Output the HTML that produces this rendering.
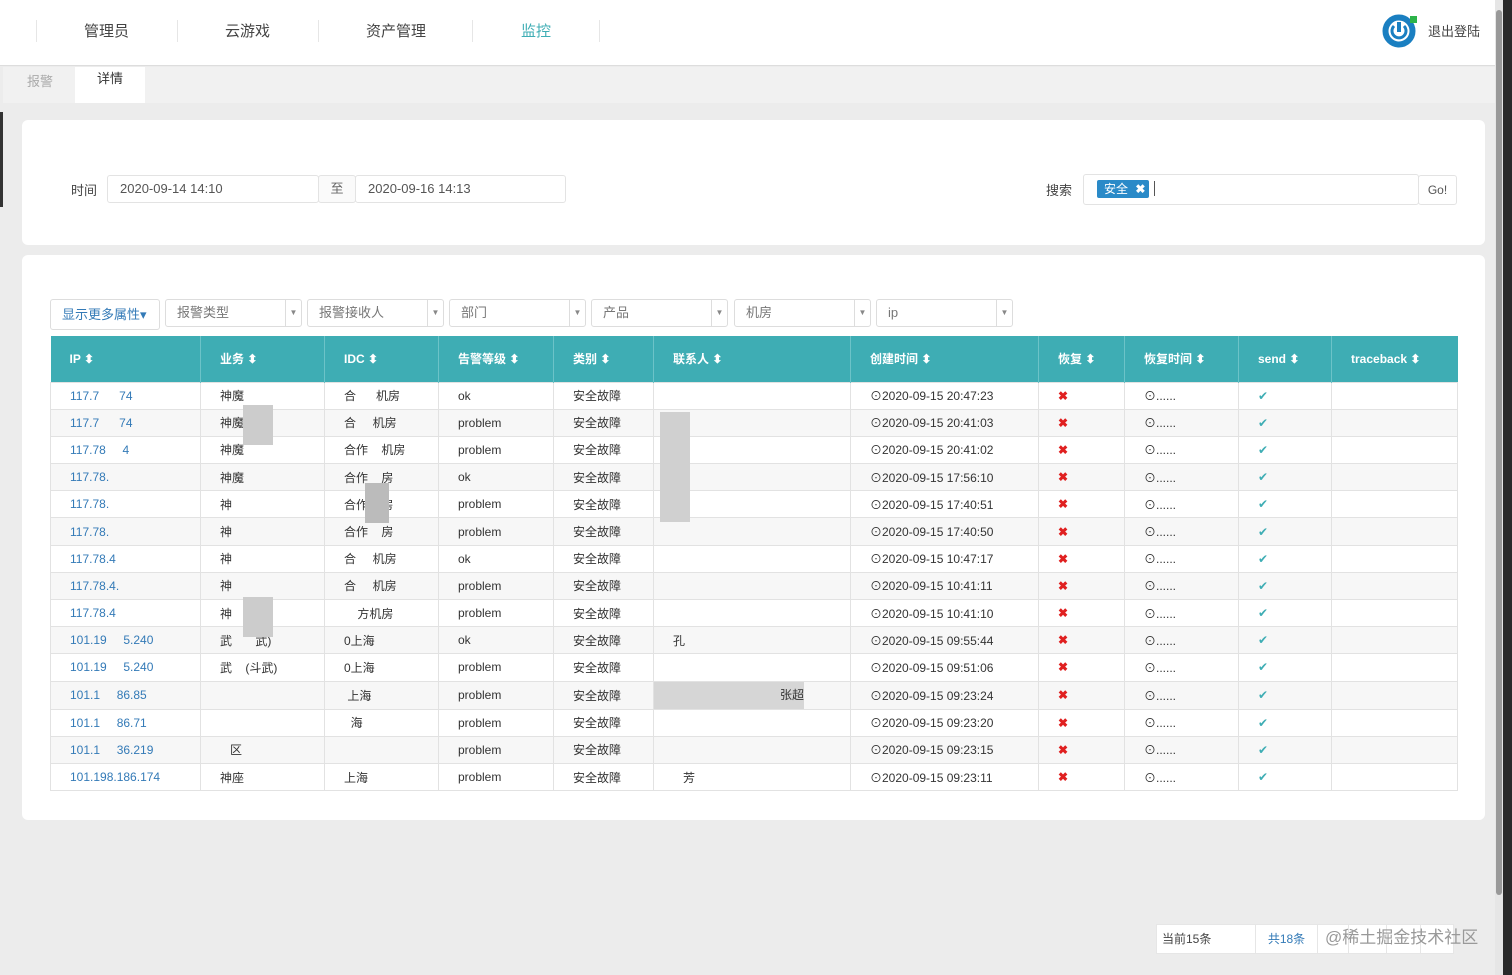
<!DOCTYPE html>
<html><head><meta charset="utf-8">
<style>
*{box-sizing:border-box;margin:0;padding:0}
body{width:1512px;height:975px;overflow:hidden;background:#ececec;font-family:"Liberation Sans","Noto Sans CJK SC",sans-serif;font-size:13px;color:#333;position:relative}
.abs{position:absolute}
#nav{left:0;top:0;width:1495px;height:66px;background:#fff;border-bottom:1px solid #ddd}
.nv{position:absolute;top:20px;font-size:15px;color:#444}
.sep{position:absolute;top:20px;width:1px;height:22px;background:#e6e6e6}
#tabs{left:3px;top:67px;width:1492px;height:36px;background:#f1f1f1}
.card{position:absolute;background:#fff;border-radius:6px;left:22px;width:1463px}
.inp{position:absolute;border:1px solid #e3e3e3;border-radius:3px;background:#fff;color:#555;font-size:13px;padding-left:12px;line-height:26px;height:28px}
.sel{position:absolute;top:299px;height:28px;border:1px solid #ddd;border-radius:3px;background:#fff;color:#777;font-size:13px;line-height:26px;padding-left:11px}
.sel i{position:absolute;right:0;top:0;width:16px;height:26px;border-left:1px solid #ddd;font-style:normal;font-size:8px;color:#888;text-align:center;line-height:26px}
table{position:absolute;left:50px;top:336px;width:1407px;border-collapse:collapse;table-layout:fixed;font-size:12px}
th{background:#3eadb4;color:#fff;height:46px;text-align:left;padding-left:19px;font-weight:bold;border-right:1px solid #6cc3c8;font-size:12px}
th:last-child{border-right:none}
td{height:27.2px;border:1px solid #e2e2e2;padding-left:19px;white-space:nowrap;overflow:hidden;color:#333}
tr:nth-child(odd) td{background:#f7f7f7}
td.ip{color:#337ab7}
.x{color:#e02020;font-weight:bold}
.ok{color:#3eadb4}
.pg{position:absolute;top:924px;height:30px;border:1px solid #e6e6e6;background:#fff;font-size:12px;line-height:28px;white-space:nowrap}
</style></head><body>
<div class="abs" style="left:0;top:0;width:3px;height:66px;background:#333"></div>
<div class="abs" id="nav">
<div class="sep" style="left:36px"></div>
<div class="nv" style="left:84px">管理员</div>
<div class="sep" style="left:177px"></div>
<div class="nv" style="left:225px">云游戏</div>
<div class="sep" style="left:318px"></div>
<div class="nv" style="left:366px">资产管理</div>
<div class="sep" style="left:472px"></div>
<div class="nv" style="left:521px;color:#3eadb4">监控</div>
<div class="sep" style="left:599px"></div>
<svg class="abs" style="left:1382px;top:13px" width="38" height="36" viewBox="0 0 38 36"><circle cx="17" cy="18" r="13.5" fill="none" stroke="#1a7fc1" stroke-width="6"/><circle cx="17" cy="18" r="7" fill="#fff"/><path d="M17 9v10" stroke="#1a7fc1" stroke-width="4"/><path d="M12 13a7 7 0 1 0 10 0" fill="none" stroke="#1a7fc1" stroke-width="3"/><rect x="28" y="3" width="7" height="7" fill="#2db34a"/></svg>
<div class="nv" style="left:1428px;top:21px;font-size:13px">退出登陆</div>
</div>
<div class="abs" id="tabs">
<div class="abs" style="left:24px;top:4px;color:#aaa;font-size:13px">报警</div>
<div class="abs" style="left:72px;top:0;width:70px;height:36px;background:#fff;text-align:center;line-height:24px;font-size:13px">详情</div>
</div>
<div class="abs" style="left:0;top:112px;width:3px;height:95px;background:#333"></div>
<div class="abs" style="left:1495px;top:0;width:8px;height:975px;background:#e6e6e6"></div>
<div class="abs" style="left:1496px;top:10px;width:6px;height:885px;background:#999;border-radius:3px"></div>
<div class="abs" style="left:1503px;top:0;width:9px;height:975px;background:#2a2a2a"></div>

<div class="card" style="top:120px;height:125px"></div>
<div class="abs" style="left:71px;top:180px;color:#444">时间</div>
<div class="inp" style="left:107px;top:175px;width:212px">2020-09-14 14:10</div>
<div class="inp" style="left:318px;top:175px;width:38px;padding:0;text-align:center;background:#fafafa;color:#666">至</div>
<div class="inp" style="left:355px;top:175px;width:211px">2020-09-16 14:13</div>
<div class="abs" style="left:1046px;top:180px;color:#444">搜索</div>
<div class="inp" style="left:1083px;top:174px;width:336px;height:31px"></div>
<div class="abs" style="left:1097px;top:180px;height:18px;width:52px;background:#2a8ac8;color:#fff;border-radius:2px;font-size:12px;line-height:18px;padding-left:7px">安全 <b style="margin-left:4px">✖</b></div>
<div class="abs" style="left:1154px;top:181px;width:1px;height:15px;background:#555"></div>
<div class="inp" style="left:1418px;top:175px;width:39px;height:30px;padding:0;text-align:center;font-size:12px;line-height:28px;color:#555">Go!</div>

<div class="card" style="top:255px;height:565px"></div>
<div class="sel" style="left:50px;top:299px;width:110px;height:31px;color:#337ab7;padding-left:11px;line-height:29px">显示更多属性▾</div>
<div class="sel" style="left:165px;width:137px">报警类型<i>▼</i></div>
<div class="sel" style="left:307px;width:137px">报警接收人<i>▼</i></div>
<div class="sel" style="left:449px;width:137px">部门<i>▼</i></div>
<div class="sel" style="left:591px;width:137px">产品<i>▼</i></div>
<div class="sel" style="left:734px;width:137px">机房<i>▼</i></div>
<div class="sel" style="left:876px;width:137px">ip<i>▼</i></div>

<table>
<colgroup><col style="width:150px"><col style="width:124px"><col style="width:114px"><col style="width:115px"><col style="width:100px"><col style="width:197px"><col style="width:188px"><col style="width:86px"><col style="width:114px"><col style="width:93px"><col style="width:126px"></colgroup>
<tr><th>IP ⬍</th><th>业务 ⬍</th><th>IDC ⬍</th><th>告警等级 ⬍</th><th>类别 ⬍</th><th>联系人 ⬍</th><th>创建时间 ⬍</th><th>恢复 ⬍</th><th>恢复时间 ⬍</th><th>send ⬍</th><th>traceback ⬍</th></tr>
<tr><td class="ip">117.7&nbsp;&nbsp;&nbsp;&nbsp;&nbsp;&nbsp;74</td><td>神魔</td><td>合&nbsp;&nbsp;&nbsp;&nbsp;&nbsp;&nbsp;机房</td><td>ok</td><td>安全故障</td><td></td><td>⊙2020-09-15 20:47:23</td><td class="x">✖</td><td>⊙......</td><td class="ok">✔</td><td></td></tr>
<tr><td class="ip">117.7&nbsp;&nbsp;&nbsp;&nbsp;&nbsp;&nbsp;74</td><td>神魔</td><td>合&nbsp;&nbsp;&nbsp;&nbsp;&nbsp;机房</td><td>problem</td><td>安全故障</td><td></td><td>⊙2020-09-15 20:41:03</td><td class="x">✖</td><td>⊙......</td><td class="ok">✔</td><td></td></tr>
<tr><td class="ip">117.78&nbsp;&nbsp;&nbsp;&nbsp;&nbsp;4</td><td>神魔</td><td>合作&nbsp;&nbsp;&nbsp;&nbsp;机房</td><td>problem</td><td>安全故障</td><td></td><td>⊙2020-09-15 20:41:02</td><td class="x">✖</td><td>⊙......</td><td class="ok">✔</td><td></td></tr>
<tr><td class="ip">117.78.</td><td>神魔</td><td>合作&nbsp;&nbsp;&nbsp;&nbsp;房</td><td>ok</td><td>安全故障</td><td></td><td>⊙2020-09-15 17:56:10</td><td class="x">✖</td><td>⊙......</td><td class="ok">✔</td><td></td></tr>
<tr><td class="ip">117.78.</td><td>神</td><td>合作&nbsp;&nbsp;&nbsp;&nbsp;房</td><td>problem</td><td>安全故障</td><td></td><td>⊙2020-09-15 17:40:51</td><td class="x">✖</td><td>⊙......</td><td class="ok">✔</td><td></td></tr>
<tr><td class="ip">117.78.</td><td>神</td><td>合作&nbsp;&nbsp;&nbsp;&nbsp;房</td><td>problem</td><td>安全故障</td><td></td><td>⊙2020-09-15 17:40:50</td><td class="x">✖</td><td>⊙......</td><td class="ok">✔</td><td></td></tr>
<tr><td class="ip">117.78.4</td><td>神</td><td>合&nbsp;&nbsp;&nbsp;&nbsp;&nbsp;机房</td><td>ok</td><td>安全故障</td><td></td><td>⊙2020-09-15 10:47:17</td><td class="x">✖</td><td>⊙......</td><td class="ok">✔</td><td></td></tr>
<tr><td class="ip">117.78.4.</td><td>神</td><td>合&nbsp;&nbsp;&nbsp;&nbsp;&nbsp;机房</td><td>problem</td><td>安全故障</td><td></td><td>⊙2020-09-15 10:41:11</td><td class="x">✖</td><td>⊙......</td><td class="ok">✔</td><td></td></tr>
<tr><td class="ip">117.78.4</td><td>神</td><td>&nbsp;&nbsp;&nbsp;&nbsp;方机房</td><td>problem</td><td>安全故障</td><td></td><td>⊙2020-09-15 10:41:10</td><td class="x">✖</td><td>⊙......</td><td class="ok">✔</td><td></td></tr>
<tr><td class="ip">101.19&nbsp;&nbsp;&nbsp;&nbsp;&nbsp;5.240</td><td>武&nbsp;&nbsp;&nbsp;&nbsp;&nbsp;&nbsp;&nbsp;武)</td><td>0上海</td><td>ok</td><td>安全故障</td><td>孔</td><td>⊙2020-09-15 09:55:44</td><td class="x">✖</td><td>⊙......</td><td class="ok">✔</td><td></td></tr>
<tr><td class="ip">101.19&nbsp;&nbsp;&nbsp;&nbsp;&nbsp;5.240</td><td>武&nbsp;&nbsp;&nbsp;&nbsp;(斗武)</td><td>0上海</td><td>problem</td><td>安全故障</td><td></td><td>⊙2020-09-15 09:51:06</td><td class="x">✖</td><td>⊙......</td><td class="ok">✔</td><td></td></tr>
<tr><td class="ip">101.1&nbsp;&nbsp;&nbsp;&nbsp;&nbsp;86.85</td><td></td><td>&nbsp;上海</td><td>problem</td><td>安全故障</td><td style="padding:0"><div style="margin-left:0;width:150px;height:27px;background:#d6d6d6;line-height:27px;text-align:right;color:#333">张超</div></td><td>⊙2020-09-15 09:23:24</td><td class="x">✖</td><td>⊙......</td><td class="ok">✔</td><td></td></tr>
<tr><td class="ip">101.1&nbsp;&nbsp;&nbsp;&nbsp;&nbsp;86.71</td><td></td><td>&nbsp;&nbsp;海</td><td>problem</td><td>安全故障</td><td></td><td>⊙2020-09-15 09:23:20</td><td class="x">✖</td><td>⊙......</td><td class="ok">✔</td><td></td></tr>
<tr><td class="ip">101.1&nbsp;&nbsp;&nbsp;&nbsp;&nbsp;36.219</td><td>&nbsp;&nbsp;&nbsp;区</td><td></td><td>problem</td><td>安全故障</td><td></td><td>⊙2020-09-15 09:23:15</td><td class="x">✖</td><td>⊙......</td><td class="ok">✔</td><td></td></tr>
<tr><td class="ip">101.198.186.174</td><td>神座</td><td>上海</td><td>problem</td><td>安全故障</td><td>&nbsp;&nbsp;&nbsp;芳</td><td>⊙2020-09-15 09:23:11</td><td class="x">✖</td><td>⊙......</td><td class="ok">✔</td><td></td></tr>
</table>
<div class="abs" style="left:660px;top:412px;width:30px;height:110px;background:#d0d0d0"></div>
<div class="abs" style="left:243px;top:405px;width:30px;height:40px;background:#ccc"></div>
<div class="abs" style="left:365px;top:483px;width:24px;height:40px;background:#bbb"></div>
<div class="abs" style="left:243px;top:597px;width:30px;height:40px;background:#ccc"></div>

<div class="pg" style="left:1156px;width:100px;padding-left:5px;color:#444">当前15条</div>
<div class="pg" style="left:1255px;width:63px;text-align:center;color:#337ab7">共18条</div>
<div class="pg" style="left:1317px;width:32px"></div>
<div class="pg" style="left:1348px;width:39px"></div>
<div class="pg" style="left:1386px;width:35px"></div>
<div class="pg" style="left:1420px;width:34px"></div>
<div class="abs" style="left:1325px;top:926px;color:#999;font-size:17px;white-space:nowrap;line-height:24px">@稀土掘金技术社区</div>
</body></html>
